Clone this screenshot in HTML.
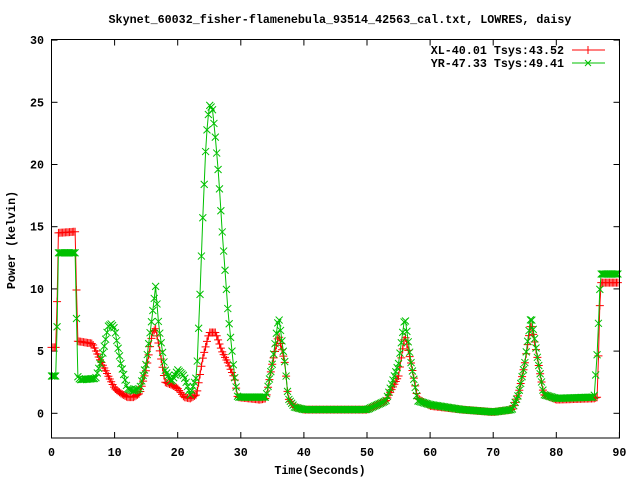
<!DOCTYPE html>
<html><head><meta charset="utf-8"><style>
html,body{margin:0;padding:0;background:#fff;width:640px;height:480px;overflow:hidden}
svg text{font-family:"Liberation Mono",monospace;font-weight:bold;font-size:11.7px;fill:#000}
</style></head><body>
<svg id="s" width="640" height="480" xmlns="http://www.w3.org/2000/svg">
<rect width="640" height="480" fill="#fff"/>
<text x="340" y="23" text-anchor="middle">Skynet_60032_fisher-flamenebula_93514_42563_cal.txt, LOWRES, daisy</text>
<text x="320" y="474" text-anchor="middle">Time(Seconds)</text>
<text transform="translate(15,240) rotate(-90)" text-anchor="middle">Power (kelvin)</text>
<g id="ax"></g>
<g id="data"></g>
<rect x="51.5" y="39.5" width="568" height="398.5" fill="none" stroke="#000" stroke-width="1"/>
<text x="564" y="54" text-anchor="end">XL-40.01 Tsys:43.52</text>
<text x="564" y="67" text-anchor="end">YR-47.33 Tsys:49.41</text>
<line x1="572" y1="50" x2="605" y2="50" stroke="#f00"/>
<line x1="588" y1="46" x2="588" y2="54" stroke="#f00"/>
<line x1="572" y1="63" x2="605" y2="63" stroke="#00c000"/>
<path d="M585 60L591 66M591 60L585 66" stroke="#00c000"/>
</svg>
<script>
function X(t){return 51.5+t*6.31}
function Y(v){return 413.3-v*12.44}
var ax=document.getElementById('ax'),h='';
for(var i=0;i<=9;i++){var x=X(i*10);h+='<line x1="'+x+'" y1="438" x2="'+x+'" y2="432" stroke="#000"/><line x1="'+x+'" y1="39.5" x2="'+x+'" y2="45.5" stroke="#000"/><text x="'+(x)+'" y="456" text-anchor="middle">'+(i*10)+'</text>';}
for(var j=0;j<=6;j++){var y=Y(j*5);h+='<line x1="51.5" y1="'+y+'" x2="57.5" y2="'+y+'" stroke="#000"/><line x1="613.5" y1="'+y+'" x2="619.5" y2="'+y+'" stroke="#000"/><text x="44" y="'+(y+4)+'" text-anchor="end">'+(j*5)+'</text>';}
ax.innerHTML=h;
var R=[[0,5.3],[0.8,5.3],[1,14.5],[3.8,14.6],[4.1,5.8],[6.5,5.6],[7.5,4.5],[9,3],[10,2],[11,1.6],[12,1.3],[13,1.3],[14,1.6],[15,3.5],[16,6.5],[16.5,6.8],[17,5.5],[18,2.5],[19,2.3],[20,2],[21,1.3],[22,1.2],[23,1.5],[24,4.5],[25,6.5],[26,6.5],[27,5],[28,4],[29,2.8],[29.5,1.3],[33,1.1],[34,1.2],[35,4],[36,6.3],[37,4],[37.5,1.2],[38.5,0.5],[40,0.3],[50,0.3],[53,1],[55,3],[56,6.3],[57,4],[58,1.2],[60,0.6],[65,0.3],[70,0.1],[73,0.3],[74,1.5],[75,4],[76,7.3],[77,4.5],[78,1.5],[80,1.1],[86,1.2],[86.5,1.3],[87,10.5],[90,10.5]];
var G=[[0,3],[0.8,3],[1,12.9],[3.8,12.9],[4.1,3],[4.5,2.7],[7,2.8],[8,4.5],[9,7],[9.5,7.2],[10,6.8],[11,4],[12,2],[13,1.8],[14,2],[15,4],[16,8],[16.5,10.2],[17,7],[18,3.5],[19,2.5],[20,3.5],[21,3],[22,1.5],[23,3],[23.5,9],[24,16],[24.5,22],[25,24.8],[25.5,24.5],[26,22],[26.5,19],[27,15],[28,8],[29,3],[29.5,1.3],[34,1.3],[35,4],[36,7.8],[37,4],[37.5,1.2],[38.5,0.5],[40,0.3],[50,0.3],[53,1],[55,4],[56,7.8],[57,4],[58,1],[60,0.7],[65,0.3],[70,0.1],[73,0.3],[74,1.5],[75,4],[76,7.9],[77,4.5],[78,1.5],[80,1.2],[86,1.3],[86.5,5],[87,11.2],[90,11.2]];
function f(K,t){for(var i=0;i<K.length-1;i++){if(t>=K[i][0]&&t<=K[i+1][0]){var a=K[i],b=K[i+1];return a[1]+(b[1]-a[1])*(t-a[0])/(b[0]-a[0]);}}return K[K.length-1][1];}
var out='';
function draw(K,col,plus){var pts=[],m='';for(var t=0;t<=89.8;t+=0.22){var x=X(t),y=Y(f(K,t));pts.push(x.toFixed(1)+','+y.toFixed(1));
 if(plus)m+='M'+(x-4)+' '+y+'h8M'+x+' '+(y-4)+'v8';else m+='M'+(x-3.5)+' '+(y-3.5)+'l7 7M'+(x+3.5)+' '+(y-3.5)+'l-7 7';}
 out+='<polyline points="'+pts.join(' ')+'" fill="none" stroke="'+col+'"/><path d="'+m+'" stroke="'+col+'" fill="none"/>';}
draw(R,'#ff0000',true);draw(G,'#00c000',false);
document.getElementById('data').innerHTML=out;
</script>
</body></html>
